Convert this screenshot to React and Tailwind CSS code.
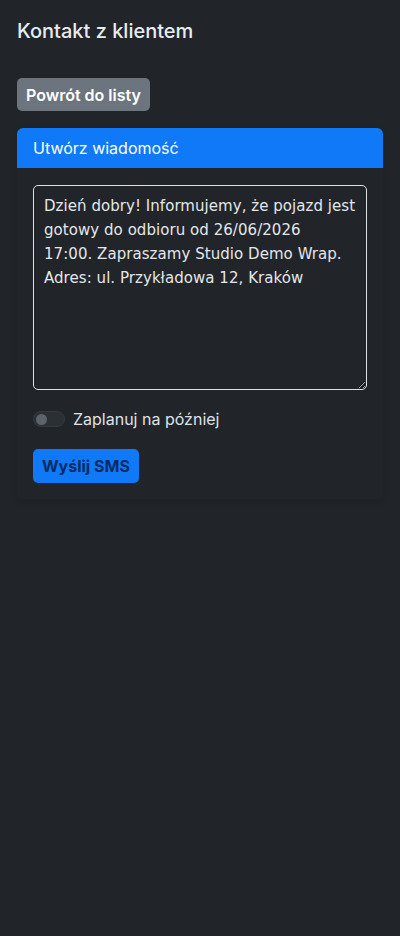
import { useState } from "react";

const message =
  "Dzień dobry! Informujemy, że pojazd jest\ngotowy do odbioru od 26/06/2026\n17:00. Zapraszamy Studio Demo Wrap.\nAdres: ul. Przykładowa 12, Kraków";

const App = () => {
  const [text, setText] = useState(message);
  const [later, setLater] = useState(false);

  return (
    <div className="min-h-[936px] bg-[#212529] text-[#dee2e6] px-[17px] pt-[18px] font-['Inter','Liberation_Sans',sans-serif]">
      <h5 className="text-[20px] leading-[26px] font-medium text-[#e9ecef]">
        Kontakt z klientem
      </h5>

      <button className="mt-[34px] h-[33px] px-[9px] rounded-[5px] bg-[#6c757d] text-white text-[16px] font-semibold leading-none">
        Powrót do listy
      </button>

      <div className="mt-[17px] rounded-[6px] bg-[#212529] shadow-[0_2px_8px_rgba(0,0,0,0.15)]">
        <div className="h-[40px] flex items-center px-[16px] bg-[#1079f7] rounded-t-[6px] text-white text-[16px]">
          Utwórz wiadomość
        </div>
        <div className="px-[16px] pt-[17px] pb-[16px]">
          <textarea
            value={text}
            onChange={(e) => setText(e.target.value)}
            className="block w-full h-[205px] rounded-[5px] border border-[#dee2e6] bg-[#212529] px-[10px] py-[8px] text-[15px] leading-[24px] tracking-[0.05px] text-[#e4e6e9] outline-none font-['DejaVu_Sans',sans-serif]"
          />

          <label className="mt-[17px] flex items-center gap-[8px] cursor-pointer">
            <button
              type="button"
              onClick={() => setLater(!later)}
              className={
                later
                  ? "w-[32px] h-[16px] rounded-full bg-[#1079f7] flex items-center justify-end px-[3px]"
                  : "w-[32px] h-[16px] rounded-full bg-[#2b3035] border border-[#343a40] flex items-center px-[2px]"
              }
            >
              <span
                className={
                  later
                    ? "w-[11px] h-[11px] rounded-full bg-white"
                    : "w-[11px] h-[11px] rounded-full bg-[#5c636a]"
                }
              />
            </button>
            <span className="text-[16px] text-[#dee2e6]">Zaplanuj na później</span>
          </label>

          <button className="mt-[18px] h-[34px] px-[9px] rounded-[5px] bg-[#1079f7] text-[#052c65] text-[16px] font-bold leading-none">
            Wyślij SMS
          </button>
        </div>
      </div>
    </div>
  );
};

export default App;
